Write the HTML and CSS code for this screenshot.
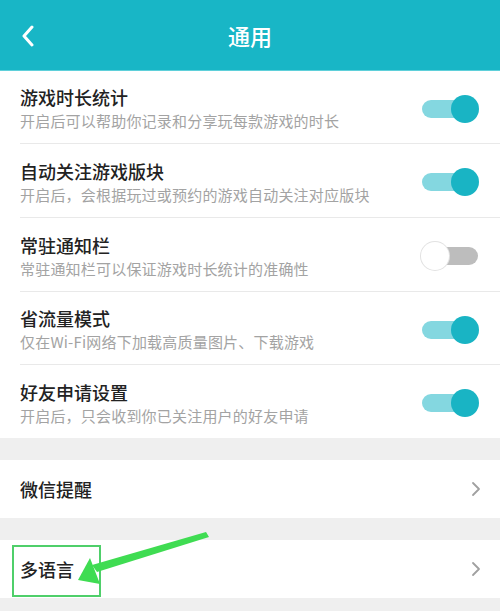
FILE: index.html
```html
<!DOCTYPE html>
<html lang="zh-CN">

<head>
    <meta charset="UTF-8">
    <meta name="viewport" content="width=device-width, initial-scale=1.0">
    <title>通用</title>
    <link rel="stylesheet" href="styles.css">
</head>

<body>

    <div class="page">
        <header class="topbar">
            <svg class="back" width="14" height="22" viewBox="0 0 14 22">
                <path d="M11 2 L3 11 L11 20" fill="none" stroke="#fff" stroke-width="3" stroke-linecap="round" stroke-linejoin="round"/>
            </svg>
            <h1 class="topbar-title">通用</h1>
        </header>

        <section class="group">
            <div class="row">
                <div class="row-text">
                    <p class="row-title">游戏时长统计</p>
                    <p class="row-desc">开启后可以帮助你记录和分享玩每款游戏的时长</p>
                </div>
                <div class="switch on"><span class="knob"></span></div>
            </div>
            <div class="row">
                <div class="row-text">
                    <p class="row-title">自动关注游戏版块</p>
                    <p class="row-desc">开启后，会根据玩过或预约的游戏自动关注对应版块</p>
                </div>
                <div class="switch on"><span class="knob"></span></div>
            </div>
            <div class="row">
                <div class="row-text">
                    <p class="row-title">常驻通知栏</p>
                    <p class="row-desc">常驻通知栏可以保证游戏时长统计的准确性</p>
                </div>
                <div class="switch"><span class="knob"></span></div>
            </div>
            <div class="row">
                <div class="row-text">
                    <p class="row-title">省流量模式</p>
                    <p class="row-desc">仅在Wi-Fi网络下加载高质量图片、下载游戏</p>
                </div>
                <div class="switch on"><span class="knob"></span></div>
            </div>
            <div class="row">
                <div class="row-text">
                    <p class="row-title">好友申请设置</p>
                    <p class="row-desc">开启后，只会收到你已关注用户的好友申请</p>
                </div>
                <div class="switch on"><span class="knob"></span></div>
            </div>
        </section>

        <section class="group">
            <div class="link-row">
                <span class="link-title">微信提醒</span>
                <svg class="chevron" width="10" height="16" viewBox="0 0 10 16">
                    <path d="M2 2 L8 8 L2 14" fill="none" stroke="#a0a0a0" stroke-width="1.8" stroke-linecap="round" stroke-linejoin="round"/>
                </svg>
            </div>
        </section>

        <section class="group">
            <div class="link-row">
                <span class="link-title">多语言</span>
                <svg class="chevron" width="10" height="16" viewBox="0 0 10 16">
                    <path d="M2 2 L8 8 L2 14" fill="none" stroke="#a0a0a0" stroke-width="1.8" stroke-linecap="round" stroke-linejoin="round"/>
                </svg>
            </div>
        </section>

        <!-- hand-drawn annotation on top of the screenshot -->
        <svg class="mark" width="500" height="611" viewBox="0 0 500 611">
            <rect x="13" y="546" width="87" height="50" fill="none" stroke="#4fcf6a" stroke-width="2"/>
            <path d="M206 532 L209 537 L97 572 L92 565 Z" fill="#3fdc52"/>
            <path d="M78 580 L90 558 L100 584 Z" fill="#3fdc52"/>
        </svg>
    </div>

</body>

</html>
```

FILE: styles.css
```css
* {
    box-sizing: border-box;
    margin: 0;
    padding: 0;
}

html,
body {
    height: 100%;
    overflow: hidden;
}

body {
    background-color: #efefef;
    font-family: "Noto Sans CJK SC", "Noto Sans", sans-serif;
    color: #222;
}

.page {
    position: relative;
    height: 611px;
}

.topbar {
    height: 71px;
    background-color: #18b6c6;
    border-bottom: 1px solid #5fd0da;
    display: flex;
    align-items: center;
    justify-content: center;
    position: relative;
}

.back {
    position: absolute;
    left: 21px;
    top: 25px;
}

.topbar-title {
    color: #fff;
    font-size: 22px;
    font-weight: 500;
}

.group {
    background-color: #fff;
    margin-bottom: 22px;
}

.row {
    display: flex;
    align-items: center;
    justify-content: space-between;
    margin-left: 20px;
    padding: 15px 21px 12px 0;
    border-bottom: 1px solid #e9e9e9;
    height: 73px;
}

.row:nth-child(2),
.row:nth-child(3) {
    height: 74px;
}

.row:last-child {
    border-bottom: none;
}

.row-title {
    font-size: 18px;
    line-height: 22px;
    font-weight: 500;
    color: #222;
}

.row-desc {
    font-size: 15px;
    line-height: 20px;
    margin-top: 3px;
    color: #a3a3a3;
    letter-spacing: 0.2px;
}

.switch {
    position: relative;
    width: 58px;
    height: 28px;
    flex-shrink: 0;
}

.switch::before {
    content: "";
    position: absolute;
    left: 1px;
    right: 1px;
    top: 5px;
    height: 18px;
    border-radius: 9px;
    background-color: #bdbdbd;
}

.switch.on::before {
    background-color: #84d7e0;
}

.knob {
    position: absolute;
    top: 0;
    left: 0;
    width: 28px;
    height: 28px;
    border-radius: 50%;
    background-color: #fff;
    box-shadow: 0 0 0 1px #e2e2e2;
}

.switch.on .knob {
    left: auto;
    right: 0;
    background-color: #19b4c4;
    box-shadow: none;
}

.link-row {
    display: flex;
    align-items: center;
    justify-content: space-between;
    height: 58px;
    padding: 0 19px 0 20px;
}

.link-title {
    font-size: 18px;
    line-height: 22px;
    font-weight: 500;
}

.mark {
    position: absolute;
    left: 0;
    top: 0;
    pointer-events: none;
}
```
